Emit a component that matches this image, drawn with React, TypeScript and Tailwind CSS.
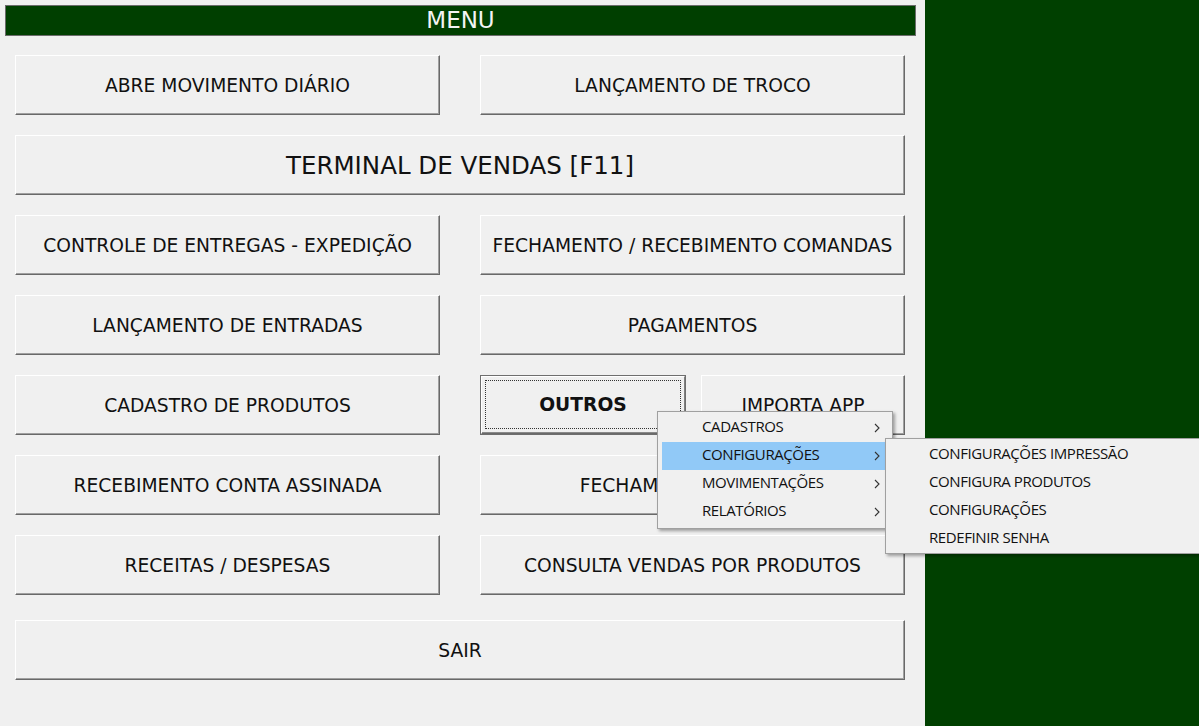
import React from "react";

type ButtonProps = {
  label: string;
  className?: string;
  big?: boolean;
};

function FormButton({ label, className = "", big = false }: ButtonProps) {
  return (
    <div
      className={`flex h-[60px] items-center justify-center whitespace-nowrap border border-t-white border-l-white border-r-[#696969] border-b-[#696969] bg-[#f0f0f0] pt-[2px] shadow-[inset_-1px_-1px_0_#a0a0a0] ${
        big ? "text-[24.5px]" : "text-[18.7px]"
      } text-[#111] ${className}`}
    >
      {label}
    </div>
  );
}

function FocusedButton({ label, className = "" }: ButtonProps) {
  return (
    <div className={`flex h-[60px] border border-[#6e6e6e] bg-[#f0f0f0] ${className}`}>
      <div className="flex h-full w-full border border-t-white border-l-white border-r-[#808080] border-b-[#6a6a6a] px-[3px] pt-[3px] pb-[4px] shadow-[inset_0_-1px_0_#8a8a8a]">
        <div className="flex h-full w-full items-center justify-center border border-dotted border-[#333] pt-[2px] text-[18.7px] font-bold text-[#111]">
          {label}
        </div>
      </div>
    </div>
  );
}

const mainItems = ["CADASTROS", "CONFIGURAÇÕES", "MOVIMENTAÇÕES", "RELATÓRIOS"];
const subItems = [
  "CONFIGURAÇÕES IMPRESSÃO",
  "CONFIGURA PRODUTOS",
  "CONFIGURAÇÕES",
  "REDEFINIR SENHA"
];

export default function App() {
  return (
    <div
      className="relative flex h-[726px] w-[1199px] overflow-hidden bg-[#004000]"
      style={{ fontFamily: '"DejaVu Sans", Verdana, sans-serif' }}
    >
      <div className="flex h-full w-[925px] flex-col bg-[#f0f0f0]">
        <div className="mx-[5px] mt-[5px] flex h-[31px] w-[911px] items-center justify-center border border-[#6b6b6b] bg-[#003f00] text-[23px] leading-none text-[#f4f4f4]">
          MENU
        </div>

        <div className="ml-[15px] mt-[19px] flex w-[890px] flex-col gap-[20px]">
          <div className="grid grid-cols-2 gap-[40px]">
            <FormButton label="ABRE MOVIMENTO DIÁRIO" />
            <FormButton label="LANÇAMENTO DE TROCO" />
          </div>
          <FormButton label="TERMINAL DE VENDAS [F11]" big />
          <div className="grid grid-cols-2 gap-[40px]">
            <FormButton label="CONTROLE DE ENTREGAS - EXPEDIÇÃO" />
            <FormButton label="FECHAMENTO / RECEBIMENTO COMANDAS" />
          </div>
          <div className="grid grid-cols-2 gap-[40px]">
            <FormButton label="LANÇAMENTO DE ENTRADAS" />
            <FormButton label="PAGAMENTOS" />
          </div>
          <div className="grid grid-cols-2 gap-[40px]">
            <FormButton label="CADASTRO DE PRODUTOS" />
            <div className="flex gap-[15px]">
              <FocusedButton label="OUTROS" className="w-[206px]" />
              <FormButton label="IMPORTA APP" className="flex-1" />
            </div>
          </div>
          <div className="grid grid-cols-2 gap-[40px]">
            <FormButton label="RECEBIMENTO CONTA ASSINADA" />
            <FormButton label="FECHAMENTO DE CAIXA" />
          </div>
          <div className="grid grid-cols-2 gap-[40px]">
            <FormButton label="RECEITAS / DESPESAS" />
            <FormButton label="CONSULTA VENDAS POR PRODUTOS" />
          </div>
          <FormButton label="SAIR" className="mt-[5px]" />
        </div>
      </div>

      {/* popup menu over OUTROS */}
      <div
        className="absolute left-[657px] top-[411px] w-[236px] border border-[#a0a0a0] bg-[#f0f0f0] px-[4px] py-[2px] text-[15px] text-[#111] shadow-[2px_2px_3px_rgba(0,0,0,0.35)]"
        style={{ fontFamily: '"Open Sans", "Noto Sans", sans-serif' }}
      >
        {mainItems.map((item) => (
          <div
            key={item}
            className={`flex h-[28px] items-center justify-between pb-[3px] pl-[40px] pr-[8px] ${
              item === "CONFIGURAÇÕES" ? "bg-[#91c9f7]" : ""
            }`}
          >
            <span className="tracking-[-0.4px]">{item}</span>
            <svg width="6" height="10" viewBox="0 0 6 10" className="mt-[3px]">
              <path d="M1 1l4 4-4 4" fill="none" stroke="#333" strokeWidth="1.1" />
            </svg>
          </div>
        ))}
      </div>

      <div
        className="absolute left-[885px] top-[438px] w-[330px] border border-[#a0a0a0] bg-[#f0f0f0] py-[1px] pl-[43px] text-[15px] text-[#111] shadow-[2px_2px_3px_rgba(0,0,0,0.35)]"
        style={{ fontFamily: '"Open Sans", "Noto Sans", sans-serif' }}
      >
        {subItems.map((item) => (
          <div key={item} className="flex h-[28px] items-center pb-[2px]">
            <span className="tracking-[-0.4px]">{item}</span>
          </div>
        ))}
      </div>
    </div>
  );
}
